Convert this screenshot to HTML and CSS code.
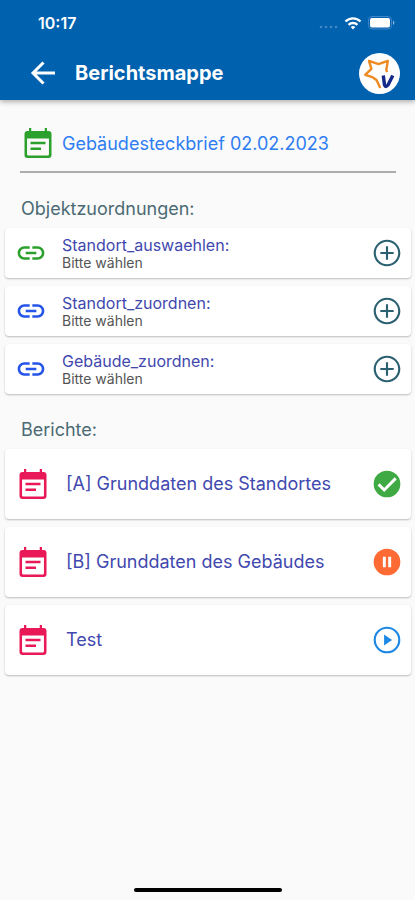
FILE: index.html
```html
<!DOCTYPE html>
<html lang="de">
<head>
<meta charset="utf-8">
<meta name="viewport" content="width=device-width, initial-scale=1">
<title>Berichtsmappe</title>
<link rel="stylesheet" href="styles.css">
</head>
<body>
<svg class="sprite" aria-hidden="true">
  <symbol id="note" viewBox="0 0 24 24"><path fill-rule="evenodd" d="M6 2h1.500v2h9V2H18v2h1a2 2 0 0 1 2 2v14a2 2 0 0 1-2 2H5a2 2 0 0 1-2-2V6a2 2 0 0 1 2-2h1zM4.700 9v10.500a.8.800 0 0 0 .8.800h13a.8.800 0 0 0 .8-.8V9zM7 11.200h10v1.600H7zM7 15h7v1.600H7z"/></symbol>
  <symbol id="link" viewBox="0 0 24 24"><path d="M3.900 12c0-1.710 1.390-3.100 3.100-3.100h4V7H7c-2.760 0-5 2.240-5 5s2.240 5 5 5h4v-1.900H7c-1.710 0-3.100-1.390-3.100-3.100zM8 13h8v-2H8v2zm9-6h-4v1.900h4c1.710 0 3.100 1.390 3.100 3.100s-1.390 3.100-3.100 3.100h-4V17h4c2.760 0 5-2.240 5-5s-2.240-5-5-5z"/></symbol>
  <symbol id="add" viewBox="0 0 24 24"><path d="M12.800 7h-1.600v4.200H7v1.600h4.200V17h1.600v-4.200H17v-1.600h-4.200V7zM12 2C6.480 2 2 6.480 2 12s4.480 10 10 10 10-4.480 10-10S17.520 2 12 2zm0 18.400c-4.640 0-8.400-3.760-8.400-8.400S7.360 3.600 12 3.600s8.400 3.760 8.400 8.400-3.760 8.400-8.400 8.400z"/></symbol>
</svg>

<header class="top">
  <div class="status">
    <time>10:17</time>
    <div class="signals">
      <svg width="20" height="14" viewBox="0 0 20 14"><g fill="#4288c6"><circle cx="3" cy="11" r="1.300"/><circle cx="8" cy="11" r="1.300"/><circle cx="13" cy="11" r="1.300"/><circle cx="18" cy="11" r="1.300"/></g></svg>
      <svg width="18" height="14" viewBox="0 0 18 14"><path d="M1.500 5.500a10.500 10.500 0 0 1 15 0M4.600 8.800a6.200 6.200 0 0 1 8.800 0" fill="none" stroke="#fff" stroke-width="2.400"/><path d="M9 13.500 6.700 11.100a3.300 3.300 0 0 1 4.600 0z" fill="#fff"/></svg>
      <svg width="27" height="14" viewBox="0 0 27 14"><rect x=".5" y=".5" width="23" height="12.500" rx="3.500" fill="none" stroke="#3f86c6"/><rect x="2" y="2" width="20" height="9.500" rx="2" fill="#fff"/><path d="M25 4.500a2.500 2.500 0 0 1 0 4.500z" fill="#8fb7df"/></svg>
    </div>
  </div>
  <div class="bar">
    <button class="icon-btn" aria-label="Zurück"><svg width="26" height="24" viewBox="0 0 26 24"><path d="M25 12H3M13.500 1.500 3 12l10.500 10.500" fill="none" stroke="#fff" stroke-width="3"/></svg></button>
    <h1>Berichtsmappe</h1>
    <svg class="logo" viewBox="0 0 41 41" role="img" aria-label="Logo"><circle cx="20.500" cy="20.500" r="20.500" fill="#fff"/><path d="M21.300 35 17.500 27l-4-2.800-7.300-2.400 6.200-6L10 7.800l9.500 3.300 9.300-3.200L27.300 17l.9 2" fill="none" stroke="#ef8a22" stroke-width="2.400" stroke-linejoin="round"/><path d="M24.300 22.500 25.500 32q1 3 3.500 0l4.800-9.500" fill="none" stroke="#14298a" stroke-width="3.400"/></svg>
  </div>
</header>

<main>
  <div class="folder"><svg class="i36 green"><use href="#note"/></svg><span>Gebäudesteckbrief 02.02.2023</span></div>

  <section>
    <h2>Objektzuordnungen:</h2>
    <ul class="cards">
      <li class="card link"><svg class="i32 green"><use href="#link"/></svg><div class="text"><h3>Standort_auswaehlen:</h3><p>Bitte wählen</p></div><button class="icon-btn add" aria-label="Standort auswählen"><svg class="i32"><use href="#add"/></svg></button></li>
      <li class="card link"><svg class="i32 blue"><use href="#link"/></svg><div class="text"><h3>Standort_zuordnen:</h3><p>Bitte wählen</p></div><button class="icon-btn add" aria-label="Standort zuordnen"><svg class="i32"><use href="#add"/></svg></button></li>
      <li class="card link"><svg class="i32 blue"><use href="#link"/></svg><div class="text"><h3>Gebäude_zuordnen:</h3><p>Bitte wählen</p></div><button class="icon-btn add" aria-label="Gebäude zuordnen"><svg class="i32"><use href="#add"/></svg></button></li>
    </ul>
  </section>

  <section>
    <h2>Berichte:</h2>
    <ul class="cards">
      <li class="card report"><svg class="i36 pink"><use href="#note"/></svg><h3 class="text">[A] Grunddaten des Standortes</h3><button class="icon-btn" aria-label="Abgeschlossen"><svg class="i32" viewBox="0 0 24 24"><circle cx="12" cy="12" r="10" fill="#3fa943"/><path d="m5.700 12.300 4.200 4.200 8.600-8.700" fill="none" stroke="#fff" stroke-width="2.200"/></svg></button></li>
      <li class="card report"><svg class="i36 pink"><use href="#note"/></svg><h3 class="text">[B] Grunddaten des Gebäudes</h3><button class="icon-btn" aria-label="Pausiert"><svg class="i32" viewBox="0 0 24 24"><circle cx="12" cy="12" r="10" fill="#fd6a33"/><path d="M8.900 8h2.200v8H8.900zM12.900 8h2.200v8h-2.200z" fill="#fff"/></svg></button></li>
      <li class="card report"><svg class="i36 pink"><use href="#note"/></svg><h3 class="text">Test</h3><button class="icon-btn" aria-label="Starten"><svg class="i32" viewBox="0 0 24 24"><circle cx="12" cy="12" r="9.200" fill="none" stroke="#1e88e5" stroke-width="1.600"/><path d="M9.800 7.800v8.400l6-4.200z" fill="#1e88e5"/></svg></button></li>
    </ul>
  </section>
</main>
<footer><div class="home"></div></footer>
</body>
</html>
```

FILE: styles.css
```css
* { box-sizing: border-box; }
body {
  margin: 0;
  min-height: 100vh;
  display: flex;
  flex-direction: column;
  background: #fafafa;
  font-family: Inter, "Liberation Sans", sans-serif;
}
h1, h2, h3, p, ul { margin: 0; padding: 0; }
ul { list-style: none; }
svg { display: block; flex: none; fill: currentColor; }
.sprite { position: absolute; width: 0; height: 0; }
.i32 { width: 32px; height: 32px; }
.i36 { width: 36px; height: 36px; }
.green { color: #2ca02c; }
.blue { color: #2454e8; }
.pink { color: #e91958; }
.icon-btn { padding: 0; border: 0; background: none; color: inherit; cursor: pointer; }
.add { color: #2b6070; }

.top {
  background: #0061ae;
  color: #fff;
  box-shadow: 0 2px 5px rgba(0, 0, 0, .3);
}
.status {
  height: 46px;
  padding: 0 20px 0 38px;
  display: flex;
  align-items: center;
  justify-content: space-between;
  font-size: 16px;
  font-weight: 600;
}
.signals { display: flex; align-items: center; gap: 6px; }
.bar {
  height: 54px;
  padding: 0 15px 0 30px;
  display: flex;
  align-items: center;
  gap: 19px;
}
.bar h1 { flex: 1; font-size: 20px; line-height: 24px; font-weight: 700; }
.logo { width: 41px; height: 41px; }

main { flex: 1; padding: 0 4px 0 5px; }
.folder {
  margin: 0 15px;
  height: 73px;
  padding-top: 15px;
  border-bottom: 2px solid #adadad;
  display: flex;
  align-items: center;
  gap: 6px;
  color: #2f7df2;
  font-size: 18px;
}
h2 {
  padding: 26px 16px 9px;
  font-size: 18px;
  line-height: 20px;
  font-weight: 400;
  color: #4b6a74;
}
h3 { font-weight: 400; color: #4148ae; }
.cards { display: flex; flex-direction: column; gap: 8px; }
.card {
  display: flex;
  align-items: center;
  background: #fff;
  border-radius: 4px;
  box-shadow: 0 1px 2px rgba(0, 0, 0, .25);
}
.text { flex: 1; min-width: 0; }
.link { height: 50px; padding: 0 8px 0 10px; gap: 15px; }
.link h3 { font-size: 16px; line-height: 18px; }
.link p { font-size: 14px; line-height: 17px; color: #555; }
.report { height: 70px; padding: 0 8px 0 10px; gap: 15px; }
.report h3 { font-size: 18px; line-height: 24px; }
footer { padding: 0 0 8px; }
.home { width: 148px; height: 4px; margin: 0 auto; border-radius: 2px; background: #000; }
```
